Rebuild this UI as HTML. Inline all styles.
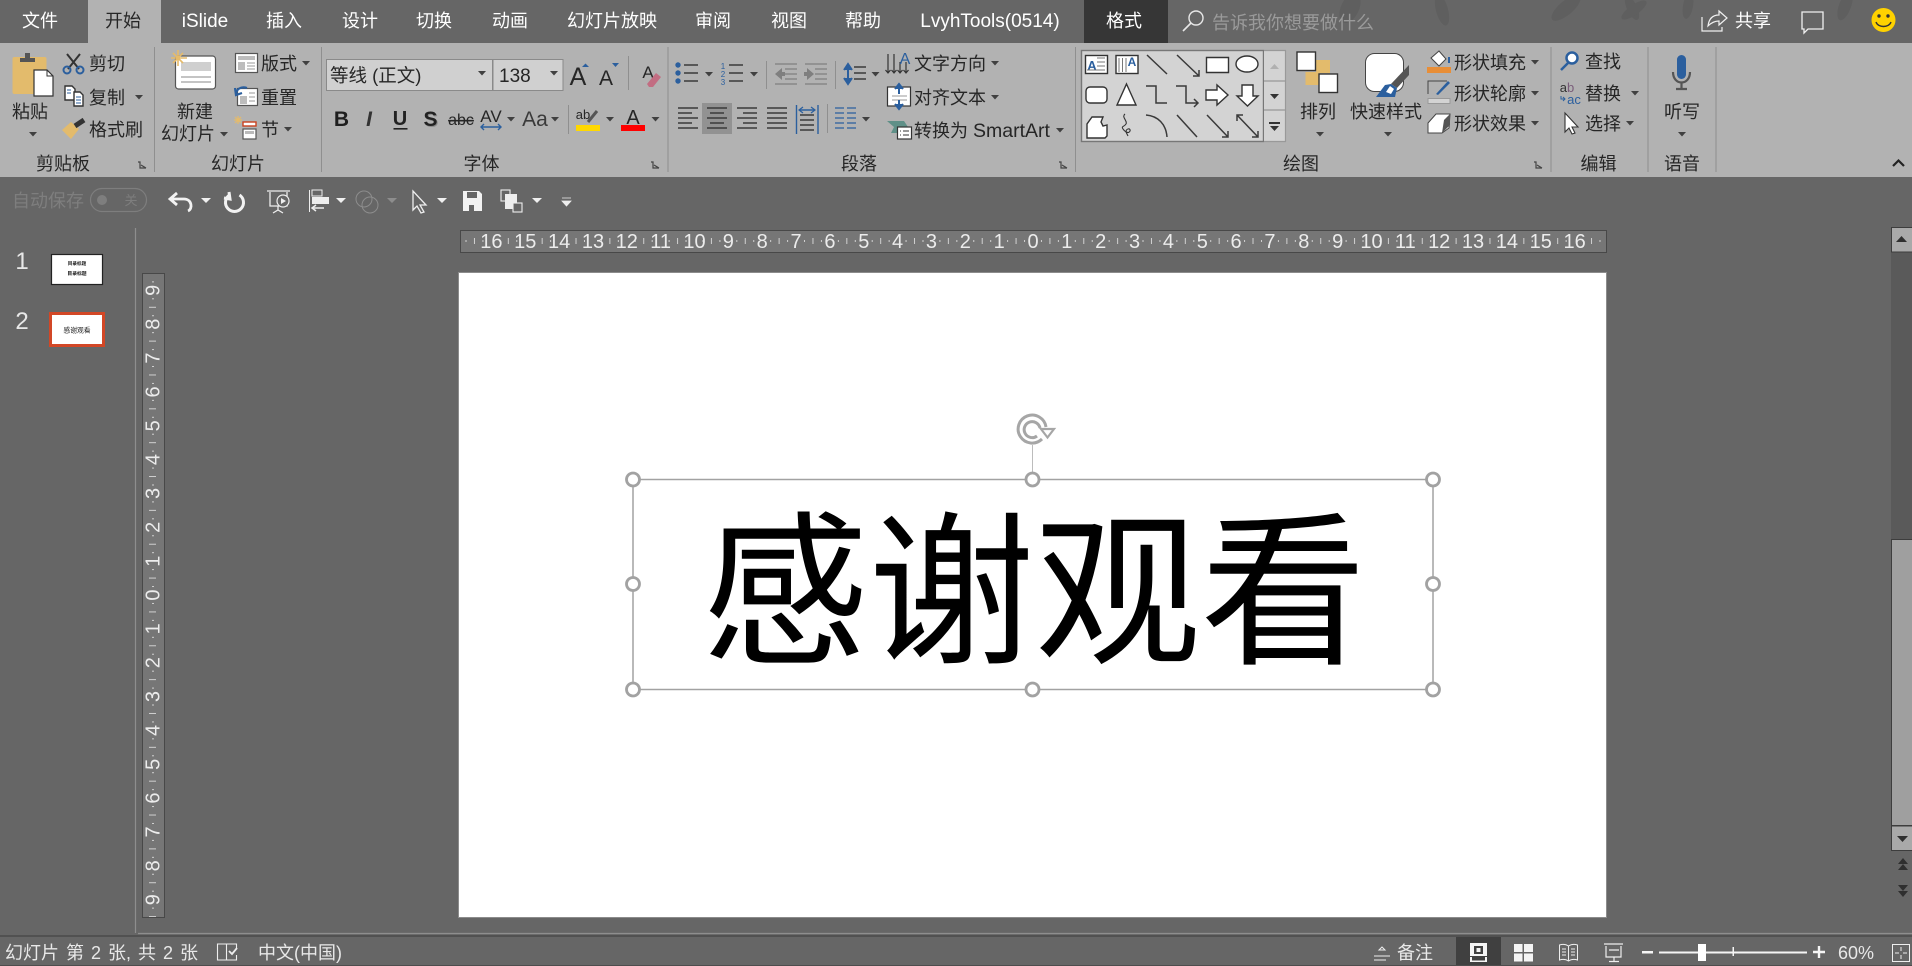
<!DOCTYPE html>
<html lang="zh"><head><meta charset="utf-8"><title>PowerPoint</title>
<style>
html,body{margin:0;padding:0;background:#666;overflow:hidden;width:1912px;height:966px}
svg{display:block;position:absolute;left:0;top:0;font-family:"Liberation Sans","Noto Sans CJK SC",sans-serif;font-size:18px;fill:#262626}
.m{text-anchor:middle}
.w{fill:#fff}
.s{fill:#e8e8e8}
.r{font-size:20px;fill:#ececec;text-anchor:middle}
.g{fill:#808080}
.n{fill:none;stroke:#333;stroke-width:1.5}
.l{fill:none;stroke:#3a3a3a;stroke-width:1.5}
.b{fill:#fff;stroke:#333;stroke-width:1.4}
</style></head><body>
<svg width="1912" height="966" viewBox="0 0 1912 966">
<defs>
<path id="d" d="M-4 -2h8l-4 4.5z" fill="#404040"/>
<path id="e" d="M-5 -2h10l-5 5z" fill="#f0f0f0"/>
<path id="c" d="M-5 -3h2v6h6M-2 0l5 3M-1 3" fill="none" stroke="#444" stroke-width="1.2"/>
<pattern id="hp" x="1033" y="230" width="33.85" height="22" patternUnits="userSpaceOnUse">
<path d="M8.46 10v2M16.92 8v6M25.39 10v2" stroke="#d0d0d0" stroke-width="1"/></pattern>
<pattern id="vp" x="142" y="595" width="22" height="33.85" patternUnits="userSpaceOnUse">
<path d="M10 8.46h2M7 16.92h7M10 25.39h2" stroke="#d0d0d0" stroke-width="1"/></pattern>
</defs>

<rect width="1912" height="966" fill="#666"/>
<!-- title leaves -->
<g fill="#5f5f5f">
<ellipse cx="1350" cy="8" rx="9" ry="16" transform="rotate(25 1350 8)"/>
<ellipse cx="1442" cy="10" rx="6" ry="16" transform="rotate(-15 1442 10)"/>
<ellipse cx="1566" cy="8" rx="7" ry="18" transform="rotate(50 1566 8)"/>
<ellipse cx="1632" cy="8" rx="5" ry="13" transform="rotate(-25 1632 8)"/>
<ellipse cx="1634" cy="10" rx="5" ry="15" transform="rotate(55 1634 10)"/>
<ellipse cx="1688" cy="6" rx="5" ry="13" transform="rotate(10 1688 6)"/>
<ellipse cx="1845" cy="6" rx="6" ry="15" transform="rotate(20 1845 6)"/>
</g>
<!-- ribbon -->
<rect x="88" y="0" width="73" height="43" fill="#b2b2b2"/>
<rect x="0" y="43" width="1912" height="134" fill="#b2b2b2"/>
<rect x="1084" y="0" width="84" height="43" fill="#363636"/>
<g class="m">
<text x="40" y="27" class="w">文件</text>
<text x="123" y="27">开始</text>
<text x="205" y="27" class="w" style="font-size:19px">iSlide</text>
<text x="284" y="27" class="w">插入</text>
<text x="360" y="27" class="w">设计</text>
<text x="434" y="27" class="w">切换</text>
<text x="510" y="27" class="w">动画</text>
<text x="612" y="27" class="w">幻灯片放映</text>
<text x="713" y="27" class="w">审阅</text>
<text x="789" y="27" class="w">视图</text>
<text x="863" y="27" class="w">帮助</text>
<text x="990" y="27" class="w" style="font-size:19px">LvyhTools(0514)</text>
<text x="1124" y="27" class="w">格式</text>
<text x="1753" y="27" class="w">共享</text>
</g>
<circle cx="1196" cy="18" r="7" fill="none" stroke="#e8e8e8" stroke-width="1.4"/>
<path d="M1191 23l-8 8" stroke="#e8e8e8" stroke-width="1.6"/>
<text x="1212" y="29" style="fill:#9a9a9a">告诉我你想要做什么</text>
<path d="M1702 17v14h20v-4M1708 26c1-8 5-11 11-11v-4l8 7-8 7v-4c-5 0-8 2-11 5z" fill="none" stroke="#f0f0f0" stroke-width="1.2"/>
<path d="M1802 12h21v17h-15l-4 4v-4h-2z" fill="none" stroke="#f0f0f0" stroke-width="1.3"/>
<ellipse cx="1883.5" cy="20" rx="12" ry="12" fill="#ffd200"/>
<circle cx="1879" cy="16" r="1.7" fill="#333"/><circle cx="1888" cy="16" r="1.7" fill="#333"/>
<path d="M1876 22c2 6 13 6 15 0" fill="none" stroke="#333" stroke-width="1.4"/>

<!-- separators -->
<path d="M154.5 47v125M321.5 47v125M668 47v125M1075.5 47v125M1551 47v125M1648 47v125M1716 47v125" stroke="#8f8f8f" stroke-width="1"/>
<path d="M628.5 56v34M568.5 105v29M766.5 61v28M835.5 61v28M827.5 104v29" stroke="#8f8f8f" stroke-width="1"/>

<!-- clipboard -->
<rect x="12.5" y="57" width="34" height="37" rx="2" fill="#e3bb6c"/>
<path d="M20 62v-4h5v-5h5v5h5v4z" fill="#555"/>
<path d="M34 70h13l6 6v20h-19z" fill="#fff" stroke="#333" stroke-width="1.2"/><path d="M47 70v6h6" fill="none" stroke="#333" stroke-width="1"/>
<text x="30" y="118" class="m">粘贴</text><use href="#d" x="33" y="134"/>
<path d="M67 54l12 15M80 54l-12 15" stroke="#333" stroke-width="2"/>
<circle cx="67" cy="70" r="3.5" fill="none" stroke="#2b5f9e" stroke-width="2"/><circle cx="80" cy="70" r="3.5" fill="none" stroke="#2b5f9e" stroke-width="2"/>
<text x="89" y="70">剪切</text>
<path d="M65 86h7l3 3v11h-10z" class="b"/><path d="M74 92h6l3 3v11h-9z" class="b"/><path d="M76 97h5M76 100h5M76 103h5M67 90h4M67 93h4" stroke="#2b5f9e" stroke-width="1"/>
<text x="89" y="104">复制</text><use href="#d" x="139" y="97"/>
<path d="M62 130l9-8 8 7-8 10z" fill="#e3bb6c"/><path d="M75 126l9-6" stroke="#333" stroke-width="5"/>
<text x="89" y="136">格式刷</text>
<text x="63" y="170" class="m">剪贴板</text><use href="#c" x="143" y="165"/>

<!-- slides -->
<rect x="175.5" y="56" width="40" height="33" rx="3" fill="#fff" stroke="#555" stroke-width="1.2"/>
<rect x="181" y="62" width="30" height="9" fill="#cfcfcf"/><path d="M181 77h30M181 82h30" stroke="#888" stroke-width="1"/>
<path d="M178 50v16M171 58h16M173 53l10 10M183 53l-10 10" stroke="#e6bb6a" stroke-width="1.6"/>
<text x="195" y="118" class="m">新建</text><text x="188" y="140" class="m">幻灯片</text><use href="#d" x="224" y="134"/>
<rect x="235.5" y="53.5" width="22" height="19" fill="#fff" stroke="#555" stroke-width="1.2"/><rect x="238" y="56" width="17" height="4" fill="#bdbdbd"/><rect x="238" y="62" width="7" height="8" fill="#bdbdbd"/><path d="M247 63h8M247 66h8M247 69h8" stroke="#999"/>
<text x="261" y="70">版式</text><use href="#d" x="306" y="63"/>
<rect x="237.5" y="88.5" width="20" height="17" fill="#fff" stroke="#555" stroke-width="1.2"/><rect x="240" y="96" width="7" height="8" fill="#bdbdbd"/><path d="M249 93h6M249 97h6M249 101h6" stroke="#999"/>
<path d="M236 95c0-6 5-9 11-7M235 88l1 7 6-2" fill="none" stroke="#2b5f9e" stroke-width="2.2"/>
<text x="261" y="104">重置</text>
<path d="M238 116v8M234 120h8M235 117l6 6M241 117l-6 6" stroke="#e6bb6a" stroke-width="1.2"/>
<rect x="243" y="122" width="13" height="4" fill="#fff" stroke="#c9421f" stroke-width="1.4"/><rect x="243" y="129" width="13" height="10" fill="#fff" stroke="#555" stroke-width="1.2"/><rect x="245" y="131" width="9" height="3" fill="#bbb"/>
<text x="261" y="136">节</text><use href="#d" x="288" y="129"/>
<text x="238" y="170" class="m">幻灯片</text>

<!-- font -->
<rect x="326.5" y="59.5" width="166" height="31" fill="#d0d0d0" stroke="#8a8a8a"/>
<rect x="493" y="59.5" width="70" height="31" fill="#d0d0d0" stroke="#8a8a8a"/>
<text x="330" y="82" style="font-size:18.500px">等线 (正文)</text><use href="#d" x="482" y="73"/>
<text x="499" y="82" style="font-size:19px">138</text><use href="#d" x="554" y="73"/>
<text x="578" y="85" class="m" style="font-size:25px">A</text><path d="M582 67l3.500-3.500 3.500 3.500z" fill="#2b5f9e"/>
<text x="606" y="85" class="m" style="font-size:21px">A</text><path d="M612 63h7l-3.500 4z" fill="#2b5f9e"/>
<text x="648" y="78" class="m" style="font-size:17px">A</text><path d="M647 84l9-11 5 4-8 10h-4z" fill="#c26d82"/>
<text x="341.500" y="126" class="m" style="font-weight:700;font-size:21px;fill:#1f1f1f">B</text>
<text x="369" y="126" class="m" style="font-style:italic;font-weight:700;font-size:21px;fill:#333">I</text>
<text x="400" y="125" class="m" style="font-size:20px;font-weight:700;fill:#222">U</text><rect x="393.500" y="128" width="14" height="1.600" fill="#222"/>
<text x="431.500" y="127" class="m" style="font-weight:700;font-size:21px;fill:#8a8a8a">S</text>
<text x="430.500" y="126" class="m" style="font-weight:700;font-size:21px;fill:#222">S</text>
<text x="461" y="125" class="m" style="font-size:16px;text-decoration:line-through">abc</text>
<text x="491" y="122" class="m" style="font-size:17px">AV</text>
<path d="M481 127h20M484 124l-3 3 3 3M498 124l3 3-3 3" fill="none" stroke="#2b5f9e" stroke-width="1.400"/>
<text x="535" y="126" class="m" style="font-size:21px;fill:#3a3a3a">Aa</text>
<use href="#d" x="511" y="119"/><use href="#d" x="555" y="119"/>
<text x="583" y="119" class="m" style="font-size:13px">ab</text><path d="M588 122l9-11" stroke="#555" stroke-width="3"/>
<rect x="576" y="125" width="24" height="6" fill="#ffd800"/><use href="#d" x="610" y="119"/>
<text x="633" y="124" class="m" style="font-size:20px">A</text><rect x="621" y="125" width="24" height="6" fill="#f00"/><use href="#d" x="655.500" y="119"/>
<text x="481.500" y="170" class="m">字体</text><use href="#c" x="656" y="165"/>

<!-- paragraph -->
<g fill="#2b5f9e"><circle cx="678" cy="65" r="2.700"/><circle cx="678" cy="73" r="2.700"/><circle cx="678" cy="81" r="2.700"/></g>
<path d="M684 65h14M684 73h14M684 81h14M729 65h14M729 73h14M729 81h14" class="l"/>
<use href="#d" x="709" y="74"/><use href="#d" x="754" y="74"/>
<text x="723" y="69" class="m" style="font-size:8px;fill:#2b5f9e">1</text><text x="723" y="77" class="m" style="font-size:8px;fill:#2b5f9e">2</text><text x="723" y="85" class="m" style="font-size:8px;fill:#2b5f9e">3</text>
<path d="M785 64h12M785 69h12M785 74h12M785 79h12M775 84h22M775 64h22M805 64h22M815 69h12M815 74h12M815 79h12M805 84h22" fill="none" stroke="#7f7f7f" stroke-width="1.200"/>
<path d="M775 74l7-6v4h3v4h-3v4zM814 74l-7-6v4h-3v4h3v4z" fill="#7f7f7f"/>
<path d="M848 66v14M844 70l4-6 4 6M844 78l4 6 4-6" fill="#2b5f9e" stroke="#2b5f9e" stroke-width="2"/>
<path d="M854 67h12M854 73h12M854 79h12" class="l"/><use href="#d" x="875.500" y="74"/>
<rect x="702" y="103" width="30" height="31" fill="#929292"/>
<path d="M678 108h20M678 113h14M678 118h20M678 123h14M678 128h20M707 108h20M710 113h14M707 118h20M710 123h14M707 128h20M737 108h20M743 113h14M737 118h20M743 123h14M737 128h20M767 108h20M767 113h20M767 118h20M767 123h20M767 128h20" class="l"/>
<path d="M796.500 105v29M818 105v29M800 110h14" fill="none" stroke="#2b5f9e" stroke-width="1.400"/><path d="M800 115h14M800 120h14M800 125h14M800 130h14" class="l"/><path d="M803 107l-4 3 4 3M811 107l4 3-4 3" fill="none" stroke="#2b5f9e" stroke-width="1.200"/>
<path d="M835 108h9M847 108h9M835 113h9M847 113h9M835 118h9M847 118h9M835 123h9M847 123h9M835 128h9M847 128h9" fill="none" stroke="#2b5f9e" stroke-width="1.300"/><use href="#d" x="866" y="119"/>
<path d="M888 54v19M894 54v19M900 62v11M906 62v11M885.500 70l2.500 3 2.500-3M891.500 70l2.500 3 2.500-3M897.500 70l2.500 3 2.500-3M903.500 70l2.500 3 2.500-3" fill="none" stroke="#333" stroke-width="1.200"/>
<text x="905" y="64" class="m" style="font-size:16px;fill:#2b5f9e">A</text>
<text x="914" y="70">文字方向</text><use href="#d" x="995" y="63"/>
<rect x="887.500" y="87" width="23" height="19" fill="#fff" stroke="#333" stroke-width="1.200"/><path d="M892 96h15M892 100h15" stroke="#999"/><path d="M899 85v9M899 100v9M895 89l4-5 4 5M895 104l4 5 4-5" fill="#2b5f9e" stroke="#2b5f9e" stroke-width="2"/>
<text x="914" y="104">对齐文本</text><use href="#d" x="995" y="97"/>
<path d="M887 121h17l4 6-4 6h-13l3-6z" fill="#5f9088"/><rect x="897.500" y="127" width="14" height="12" fill="#fff" stroke="#333" stroke-width="1.200"/><path d="M900 131h1M903 131h6M900 135h1M903 135h6" stroke="#333"/>
<text x="914" y="137">转换为 <tspan style="font-size:19.500px">SmartArt</tspan></text><use href="#d" x="1060" y="130"/>
<text x="859" y="170" class="m">段落</text><use href="#c" x="1064" y="165"/>

<!-- gallery -->
<rect x="1081.500" y="50.500" width="182" height="91" fill="#d3d3d3" stroke="#777" stroke-width="1.400"/>
<path d="M1264 50.500h21.500v91h-21.500M1264 81h21.500M1264 110h21.500" fill="#d3d3d3" stroke="#999" stroke-width="1.200"/>
<path d="M1270 69l4.500-5 4.500 5z" fill="#b0b0b0"/><path d="M1270 94h9l-4.500 5z" fill="#333"/><path d="M1269 122h11v2h-11zM1270 126h9l-4.500 5z" fill="#333"/>
<rect x="1085.500" y="55.500" width="22" height="18" class="b"/><text x="1092" y="70" class="m" style="font-size:13px;font-weight:700;fill:#2b5f9e">A</text><path d="M1097 58h8M1097 62h8M1097 66h8M1087 70h18" stroke="#777"/>
<rect x="1116" y="55.500" width="22" height="18" class="b"/><path d="M1119 58v14M1122.500 58v14M1126 58v14" stroke="#777"/><text x="1132" y="66" class="m" style="font-size:12px;font-weight:700;fill:#2b5f9e">A</text>
<path d="M1147 55l20 19M1177 55l22 21M1193 76h6v-6" class="l"/><path d="M1206.500 57.500h22v15h-22z" class="b"/>
<ellipse cx="1247" cy="64" rx="11" ry="8" class="b"/>
<rect x="1086" y="87" width="21" height="16" rx="4" class="b"/>
<path d="M1126.500 84l9.500 21h-19z" class="b"/>
<path d="M1146 86h10v17h11M1176 86h10v17h12M1194 99l4 4-4 4" class="l"/>
<path d="M1206 90h11v-5l11 10-11 10v-5h-11zM1242 85h11v11h5l-10.500 10-10.500-10h5z" class="b"/>
<path d="M1092 117h11l-2 5 2 4 4-1v11l-2 2h-18v-14z" class="b"/>
<path d="M1125 114c-4 3 3 7 1 10s-5 2-3 5 6 5 7 2-4-3-4 1l2 4" fill="none" stroke="#333" stroke-width="1.100"/>
<path d="M1146 115c12 1 20 9 21 22M1177 115l20 22M1207 115l21 22M1222 137h6v-6M1237 115l21 22M1252 137h6v-6M1237 121v-6h6" class="l"/>

<!-- arrange -->
<rect x="1316" y="60" width="14" height="13" fill="#e3bb6c"/><rect x="1305.500" y="72" width="14" height="13" fill="#e3bb6c"/>
<rect x="1297" y="52" width="18.500" height="18.500" fill="#fff" stroke="#333" stroke-width="1.400"/>
<rect x="1319" y="74" width="18.500" height="18.500" fill="#fff" stroke="#333" stroke-width="1.400"/>
<text x="1318" y="118" class="m">排列</text><use href="#d" x="1320" y="134"/>
<rect x="1365.500" y="53.500" width="38" height="38" rx="9" fill="#fff" stroke="#444" stroke-width="1"/>
<path d="M1409 65v10l-12 13-6-4z" fill="#555"/><path d="M1376 97l9-12 6-1 6 4-2 9z" fill="#2b5f9e"/><path d="M1386 92l4-6 4 3-3 5z" fill="#fff"/>
<text x="1386" y="118" class="m">快速样式</text><use href="#d" x="1388" y="134"/>
<rect x="1427" y="67" width="24" height="6" fill="#e88e37"/><path d="M1431 58l8-7 7 8-7 7z" fill="#fff" stroke="#444" stroke-width="1"/><path d="M1449 57v6" stroke="#2b5f9e" stroke-width="2"/>
<text x="1454" y="69">形状填充</text><use href="#d" x="1535" y="62"/>
<path d="M1428 94v-13h19" fill="none" stroke="#444" stroke-width="1"/><path d="M1436 94l12-13 2 2-12 12z" fill="#2b5f9e"/><rect x="1428" y="98.500" width="22" height="5" fill="#d3d3d3" stroke="#999"/>
<text x="1454" y="100">形状轮廓</text><use href="#d" x="1535" y="93"/>
<path d="M1428 123l8-9h14l-1 14-7 5h-14z" fill="#fff" stroke="#444"/><path d="M1442 133l8-8v-11l-6 6z" fill="#555"/>
<text x="1454" y="130">形状效果</text><use href="#d" x="1535" y="123"/>
<text x="1301" y="170" class="m">绘图</text><use href="#c" x="1539" y="165"/>

<!-- editing -->
<circle cx="1572" cy="58" r="5.500" fill="#fff" stroke="#2b5f9e" stroke-width="2.500"/><path d="M1568 63l-7 7" stroke="#2b5f9e" stroke-width="2.500"/>
<text x="1585" y="68">查找</text>
<text x="1567" y="92" class="m" style="font-size:13px;fill:#333">a<tspan style="fill:#7a5d7a">b</tspan></text>
<text x="1574" y="104" class="m" style="font-size:13px;fill:#2b5f9e">ac</text><path d="M1561 96v3h4M1563 97l2 2-2 2" fill="none" stroke="#2b5f9e"/>
<text x="1585" y="100">替换</text><use href="#d" x="1635" y="93"/>
<path d="M1565 113v19l4-4 3 6 3-1-3-6h6z" fill="#fff" stroke="#333" stroke-width="1.100"/>
<text x="1585" y="130">选择</text><use href="#d" x="1630" y="123"/>
<text x="1598.500" y="170" class="m">编辑</text>

<!-- voice -->
<rect x="1677" y="55" width="9" height="24" rx="4.500" fill="#2b5f9e"/>
<path d="M1673 72c0 14 17 14 17 0M1681.500 82v6M1676 89h11" fill="none" stroke="#555" stroke-width="2.200"/>
<text x="1682" y="118" class="m">听写</text><use href="#d" x="1682" y="134"/>
<text x="1682" y="170" class="m">语音</text>
<path d="M1893 166l5.500-5.500 5.500 5.500" fill="none" stroke="#222" stroke-width="2.200"/>

<!-- QAT -->
<text x="12" y="207" style="fill:#7e7e7e">自动保存</text>
<rect x="90.500" y="188.500" width="56" height="23" rx="11.500" fill="none" stroke="#7e7e7e" stroke-width="1.200"/>
<circle cx="102" cy="200" r="5" fill="#7e7e7e"/><text x="131" y="205" class="m" style="font-size:13px;fill:#7e7e7e">关</text>
<path d="M177 193l-7 6 7 6M171 199h13c8 0 9 10 4 12" fill="none" stroke="#f2f2f2" stroke-width="2.800"/><use href="#e" x="206" y="200"/>
<path d="M229.500 195a9 9 0 1 0 10 0M229 192l1 7-6-1" fill="none" stroke="#f2f2f2" stroke-width="3"/>
<path d="M267 191h23M270 192v14h17v-14M278 206v4M273 213l5-3 5 3" fill="none" stroke="#eee" stroke-width="1.300"/><circle cx="283" cy="201" r="6" fill="#666" stroke="#eee" stroke-width="1.200"/><path d="M281 198l5 3-5 3z" fill="#eee"/>
<path d="M309.500 190v22" stroke="#eee" stroke-width="1"/><rect x="312" y="190" width="10" height="6" fill="none" stroke="#eee"/><rect x="312" y="197" width="17" height="7" fill="#eee"/><path d="M324 208h-11M316 205l-4 3 4 3" fill="none" stroke="#eee" stroke-width="1.500"/><use href="#e" x="341" y="200"/>
<circle cx="364" cy="199" r="8" fill="none" stroke="#8d8d8d"/><circle cx="370" cy="205" r="8" fill="none" stroke="#8d8d8d"/><path d="M387 198h10l-5 5z" fill="#8d8d8d"/>
<path d="M413 191v19l4-4 4 7 3-1-4-7h6z" fill="none" stroke="#eee" stroke-width="1.300"/><use href="#e" x="442" y="200"/>
<path d="M463 191h16l3 3v17h-19z" fill="#f2f2f2"/><rect x="467" y="192" width="10" height="6" fill="#666"/><rect x="469" y="205" width="5" height="6" fill="#666"/>
<rect x="501" y="190" width="9" height="11" fill="none" stroke="#eee" stroke-width="1.100"/><rect x="505" y="194" width="12" height="15" fill="#eee"/><rect x="513" y="203" width="9" height="9" fill="#666" stroke="#eee" stroke-width="1.100"/><use href="#e" x="537" y="200"/>
<path d="M562 198h9M562 201h9l-4.500 5z" fill="#eee" stroke="#eee" stroke-width=".8"/>

<!-- left pane -->
<path d="M135.500 228v705M138 933.500h1774" stroke="#8e8e8e" stroke-width="1.200"/>
<text x="22" y="269" class="m s" style="font-size:24px">1</text>
<text x="22" y="329" class="m s" style="font-size:24px">2</text>
<rect x="51.500" y="254.500" width="51" height="30" fill="#fff" stroke="#222" stroke-width="1.200"/>
<text x="77" y="265" class="m" style="font-size:4.600px;font-weight:700;fill:#111">目录标题</text>
<text x="77" y="275" class="m" style="font-size:4.800px;font-weight:700;fill:#111">目录标题</text>
<rect x="50.500" y="313.500" width="53" height="32" fill="#fff" stroke="#d24726" stroke-width="3"/>
<text x="77" y="332.500" class="m" style="font-size:6.800px;fill:#222">感谢观看</text>

<!-- rulers -->
<rect x="460.500" y="230.500" width="1146" height="22" fill="#767676" stroke="#484848" stroke-width="1"/>
<rect x="461" y="231" width="1145" height="21" fill="url(#hp)"/>
<rect x="142.500" y="273.500" width="22" height="644" fill="#767676" stroke="#484848" stroke-width="1"/>
<rect x="143" y="274" width="21" height="643" fill="url(#vp)"/>
<g>
<text class="r" x="491.400" y="248">16</text><text class="r" x="525.250" y="248">15</text><text class="r" x="559.100" y="248">14</text><text class="r" x="593" y="248">13</text><text class="r" x="626.800" y="248">12</text><text class="r" x="660.650" y="248">11</text><text class="r" x="694.500" y="248">10</text><text class="r" x="728.350" y="248">9</text><text class="r" x="762.200" y="248">8</text><text class="r" x="796.050" y="248">7</text><text class="r" x="829.900" y="248">6</text><text class="r" x="863.750" y="248">5</text><text class="r" x="897.600" y="248">4</text><text class="r" x="931.450" y="248">3</text><text class="r" x="965.300" y="248">2</text><text class="r" x="999.150" y="248">1</text><text class="r" x="1033" y="248">0</text><text class="r" x="1066.850" y="248">1</text><text class="r" x="1100.700" y="248">2</text><text class="r" x="1134.550" y="248">3</text><text class="r" x="1168.400" y="248">4</text><text class="r" x="1202.250" y="248">5</text><text class="r" x="1236.100" y="248">6</text><text class="r" x="1269.950" y="248">7</text><text class="r" x="1303.800" y="248">8</text><text class="r" x="1337.650" y="248">9</text><text class="r" x="1371.500" y="248">10</text><text class="r" x="1405.350" y="248">11</text><text class="r" x="1439.200" y="248">12</text><text class="r" x="1473.050" y="248">13</text><text class="r" x="1506.900" y="248">14</text><text class="r" x="1540.750" y="248">15</text><text class="r" x="1574.600" y="248">16</text>
</g>
<g>
<text class="r" transform="translate(159.500,290.350) rotate(-90)">9</text>
<text class="r" transform="translate(159.500,324.200) rotate(-90)">8</text>
<text class="r" transform="translate(159.500,358.050) rotate(-90)">7</text>
<text class="r" transform="translate(159.500,391.900) rotate(-90)">6</text>
<text class="r" transform="translate(159.500,425.750) rotate(-90)">5</text>
<text class="r" transform="translate(159.500,459.600) rotate(-90)">4</text>
<text class="r" transform="translate(159.500,493.450) rotate(-90)">3</text>
<text class="r" transform="translate(159.500,527.300) rotate(-90)">2</text>
<text class="r" transform="translate(159.500,561.150) rotate(-90)">1</text>
<text class="r" transform="translate(159.500,595) rotate(-90)">0</text>
<text class="r" transform="translate(159.500,628.850) rotate(-90)">1</text>
<text class="r" transform="translate(159.500,662.700) rotate(-90)">2</text>
<text class="r" transform="translate(159.500,696.550) rotate(-90)">3</text>
<text class="r" transform="translate(159.500,730.400) rotate(-90)">4</text>
<text class="r" transform="translate(159.500,764.250) rotate(-90)">5</text>
<text class="r" transform="translate(159.500,798.100) rotate(-90)">6</text>
<text class="r" transform="translate(159.500,831.950) rotate(-90)">7</text>
<text class="r" transform="translate(159.500,865.800) rotate(-90)">8</text>
<text class="r" transform="translate(159.500,899.650) rotate(-90)">9</text>
</g>

<!-- slide -->
<rect x="458.500" y="272.500" width="1148" height="645" fill="#fff" stroke="#8c8c8c" stroke-width="1"/>
<text x="1034.500" y="651" class="m" style="font-size:166px;fill:#000;font-family:'WenQuanYi Zen Hei','Noto Sans CJK SC',sans-serif">感谢观看</text>
<rect x="633" y="479.500" width="800" height="210" fill="none" stroke="#a2a2a2" stroke-width="1.500"/>
<path d="M1032.500 445v27" stroke="#bcbcbc" stroke-width="1"/>
<path d="M1042 439a14 14 0 1 1 4-12M1037 436a8 8 0 1 1 3-8" fill="none" stroke="#a6a6a6" stroke-width="3"/>
<path d="M1041 429h13l-6.500 8.500z" fill="#fff" stroke="#a6a6a6" stroke-width="2.200"/>
<g fill="#fff" stroke="#a2a2a2" stroke-width="2.800">
<circle cx="633" cy="479.500" r="6.500"/><circle cx="1032.500" cy="479.500" r="6.500"/><circle cx="1433" cy="479.500" r="6.500"/>
<circle cx="633" cy="584" r="6.500"/><circle cx="1433" cy="584" r="6.500"/>
<circle cx="633" cy="689.500" r="6.500"/><circle cx="1032.500" cy="689.500" r="6.500"/><circle cx="1433" cy="689.500" r="6.500"/>
</g>

<!-- scrollbar -->
<rect x="1891" y="227" width="21" height="312" fill="#5a5a5a"/>
<rect x="1891.500" y="227.500" width="21" height="24.500" fill="#a9a9a9" stroke="#3d3d3d" stroke-width="1"/>
<path d="M1896 242l5.500-6 5.500 6z" fill="#2f2f2f"/>
<rect x="1891.500" y="539.500" width="21" height="286" fill="#9f9f9f" stroke="#3d3d3d" stroke-width="1"/>
<rect x="1891.500" y="826" width="21" height="24.500" fill="#a9a9a9" stroke="#3d3d3d" stroke-width="1"/>
<path d="M1897 836h11l-5.500 6z" fill="#2f2f2f"/>
<path d="M1898 864l5-6 5 6zM1898 870l5-6 5 6zM1898 885h10l-5 6zM1898 891h10l-5 6z" fill="#2f2f2f"/>

<!-- status bar -->
<rect x="0" y="936" width="1912" height="30" fill="#666"/>
<path d="M0 936h1912" stroke="#4a4a4a" stroke-width="1.400"/><path d="M0 965.500h1912" stroke="#4d4d4d" stroke-width="1"/>
<text x="5" y="959" class="s" style="word-spacing:2px">幻灯片 第 2 张, 共 2 张</text>
<path d="M217.500 944h9v16h-9zM226.500 944h10v5M236.500 955v5h-10" fill="none" stroke="#eee" stroke-width="1.100"/><path d="M229 951l3 3 5-6" fill="none" stroke="#eee" stroke-width="1.800"/>
<text x="258" y="959" class="s">中文(中国)</text>
<path d="M1374 956h16M1374 960h12M1379 950l3-3 3 3z" fill="none" stroke="#eee" stroke-width="1"/>
<text x="1397" y="959" class="s">备注</text>
<rect x="1456" y="937" width="45" height="28" fill="#404040"/>
<rect x="1470" y="943" width="17" height="19" fill="#f5f5f5"/><rect x="1474" y="946" width="9" height="8" fill="#404040"/><rect x="1476.500" y="948" width="4" height="4" fill="#f5f5f5"/><rect x="1470" y="956" width="17" height="1" fill="#404040"/><rect x="1472" y="957" width="13" height="3.500" fill="#404040"/>
<path d="M1514 944h8.500v8h-8.500zM1524 944h9v8h-9zM1514 953.500h8.500v8h-8.500zM1524 953.500h9v8h-9z" fill="#f5f5f5"/>
<path d="M1559.500 945c3-1 6-1 9 1 3-2 6-2 9-1v15c-3-1-6-1-9 1-3-2-6-2-9-1zM1568.500 946v15M1562 949h4M1562 952h4M1562 955h4M1571 949h4M1571 952h4M1571 955h4" fill="none" stroke="#eee" stroke-width="1"/>
<path d="M1604 944h19M1606 946v11h15v-11M1614 957v4M1609 961.500h10M1609 950h10" fill="none" stroke="#eee" stroke-width="1.200"/>
<rect x="1642" y="951" width="11" height="2.500" fill="#f5f5f5"/>
<rect x="1659" y="951.500" width="148" height="2" fill="#f5f5f5"/><rect x="1698" y="944" width="8" height="17" fill="#fff"/><rect x="1732.500" y="947" width="1.500" height="9" fill="#f5f5f5"/>
<path d="M1813 952h12M1819 946v12" stroke="#f5f5f5" stroke-width="2.400"/>
<text x="1856" y="959" class="m s">60%</text>
<rect x="1892.500" y="944.500" width="17" height="17" fill="none" stroke="#eee" stroke-width="1"/><path d="M1901 947v4M1901 955v4M1895 953h4M1903 953h4" stroke="#eee"/>
</svg>
</body></html>
